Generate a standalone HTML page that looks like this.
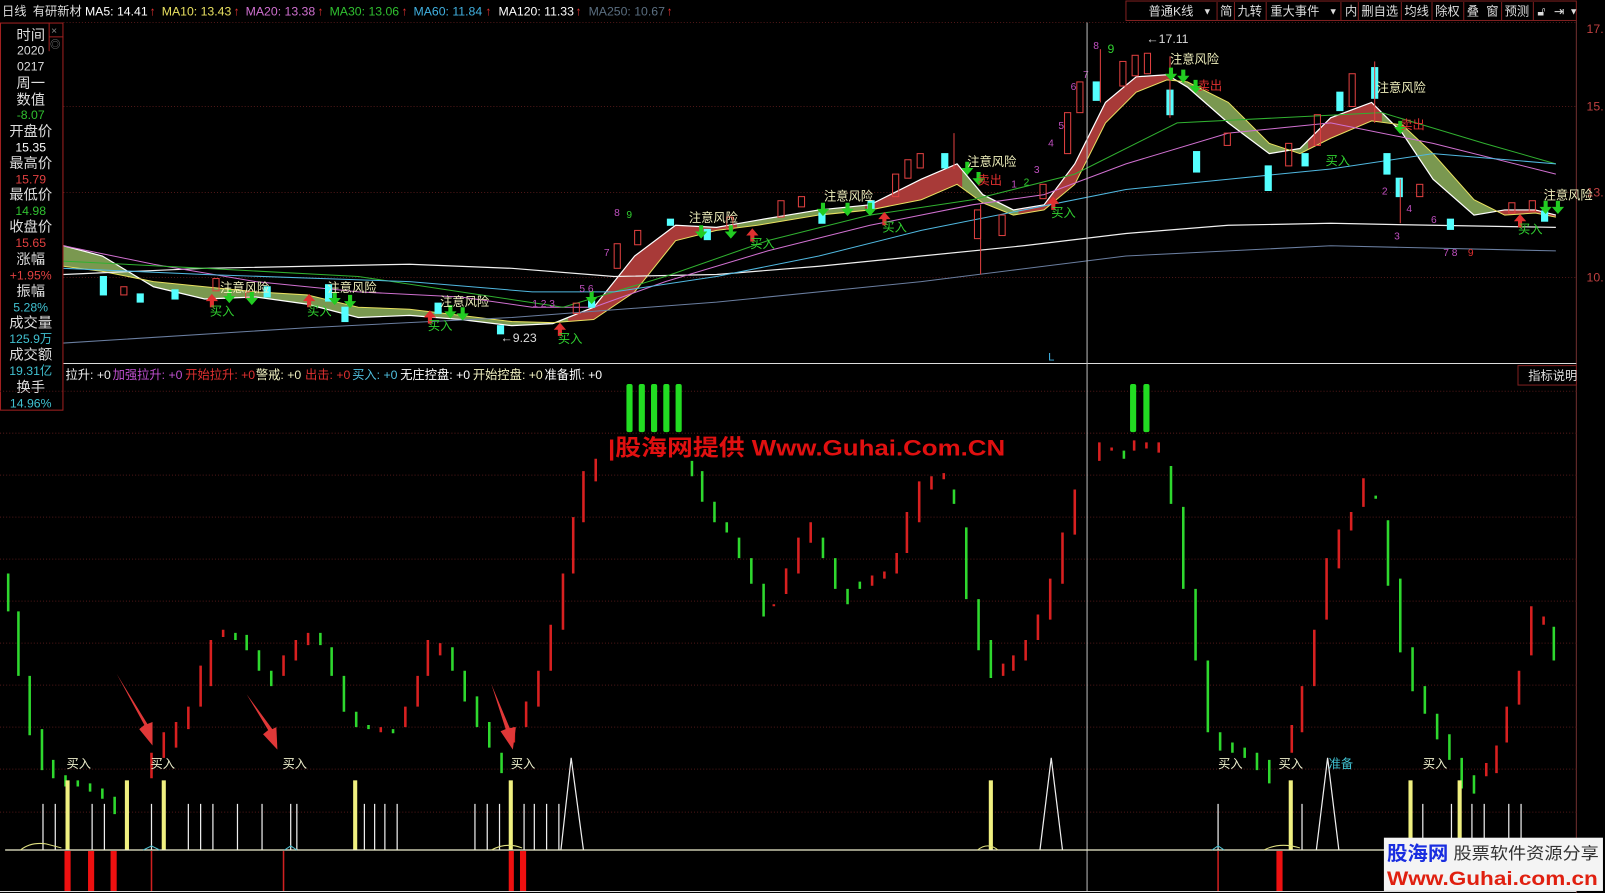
<!DOCTYPE html>
<html><head><meta charset="utf-8"><style>
html,body{margin:0;padding:0;background:#000;width:1605px;height:893px;overflow:hidden}
svg{display:block}
text{font-family:"Liberation Sans","Noto Sans CJK SC","WenQuanYi Zen Hei",sans-serif}
</style></head><body>
<svg width="1605" height="893" viewBox="0 0 1568 872" preserveAspectRatio="none" xmlns="http://www.w3.org/2000/svg">
<rect width="1568" height="872" fill="#000"/>
<!-- top bar -->
<g font-size="12">
<text x="2" y="15" fill="#ddd">日线</text>
<text x="32" y="15" fill="#ddd">有研新材</text>
<text x="83" y="15" fill="#fff">MA5: 14.41</text><text x="146" y="15" fill="#e03030">↑</text>
<text x="158" y="15" fill="#e8e060">MA10: 13.43</text><text x="228" y="15" fill="#e03030">↑</text>
<text x="240" y="15" fill="#d070d0">MA20: 13.38</text><text x="310" y="15" fill="#e03030">↑</text>
<text x="322" y="15" fill="#30c030">MA30: 13.06</text><text x="392" y="15" fill="#e03030">↑</text>
<text x="404" y="15" fill="#40b0e0">MA60: 11.84</text><text x="474" y="15" fill="#e03030">↑</text>
<text x="487" y="15" fill="#fff">MA120: 11.33</text><text x="562" y="15" fill="#e03030">↑</text>
<text x="575" y="15" fill="#5a6e80">MA250: 10.67</text><text x="651" y="15" fill="#e03030">↑</text>
</g>
<rect x="1100" y="1" width="440" height="19" fill="none" stroke="#802020"/>
<g font-size="12" fill="#ddd">
<text x="1122" y="15">普通K线</text><text x="1175" y="14" font-size="9">▼</text>
<text x="1192" y="15">简</text><text x="1209" y="15">九转</text><text x="1241" y="15">重大事件</text><text x="1298" y="14" font-size="9">▼</text>
<text x="1314" y="15">内</text><text x="1330" y="15">删自选</text><text x="1372" y="15">均线</text><text x="1402" y="15">除权</text><text x="1433" y="15">叠</text><text x="1452" y="15">窗</text><text x="1470" y="15">预测</text><text x="1502" y="15">🔓︎</text><text x="1518" y="15">⇥</text><text x="1533" y="14" font-size="9">▼</text>
</g>
<g stroke="#802020" stroke-width="1"><line x1="1189" y1="2" x2="1189" y2="20"/><line x1="1206" y1="2" x2="1206" y2="20"/><line x1="1237" y1="2" x2="1237" y2="20"/><line x1="1310" y1="2" x2="1310" y2="20"/><line x1="1327" y1="2" x2="1327" y2="20"/><line x1="1369" y1="2" x2="1369" y2="20"/><line x1="1399" y1="2" x2="1399" y2="20"/><line x1="1430" y1="2" x2="1430" y2="20"/><line x1="1467" y1="2" x2="1467" y2="20"/><line x1="1498" y1="2" x2="1498" y2="20"/></g>
<line x1="62" y1="22" x2="1540" y2="22" stroke="#501818" stroke-dasharray="1 2"/>
<!-- right axis -->
<line x1="1540" y1="20" x2="1540" y2="872" stroke="#703030"/>
<g font-size="12" fill="#c04040"><text x="1550" y="32">17.</text><text x="1550" y="108">15.</text><text x="1550" y="192">13.</text><text x="1550" y="275">10.</text></g>
<g stroke="#501818" stroke-dasharray="1 2"><line x1="62" y1="104" x2="1540" y2="104"/><line x1="62" y1="188" x2="1540" y2="188"/><line x1="62" y1="271" x2="1540" y2="271"/></g>
<!-- ribbon -->
<defs>
<clipPath id="up"><rect x="555" y="0" width="165" height="400"/><rect x="845" y="0" width="95" height="400"/><rect x="995" y="0" width="155" height="400"/><rect x="1278" y="0" width="72" height="400"/><rect x="1460" y="0" width="60" height="400"/></clipPath>
<polygon id="ribp" points="62,240 100,250 150,280 200,292 250,290 300,297 350,310 400,308 450,312 500,318 540,316 580,300 620,250 660,220 700,222 740,215 800,205 850,200 900,175 935,160 960,190 990,205 1020,200 1050,160 1080,100 1110,75 1140,73 1160,85 1200,120 1240,150 1270,145 1300,115 1340,100 1370,130 1400,175 1440,210 1470,205 1500,205 1520,210 1520,212 1500,208 1470,210 1440,195 1400,150 1370,122 1340,118 1300,135 1270,150 1240,140 1200,100 1160,80 1140,78 1110,90 1080,120 1050,180 1020,205 990,210 960,198 935,180 900,195 850,205 800,210 740,220 700,225 660,235 620,285 580,312 540,315 500,314 450,308 400,302 350,300 300,288 250,285 200,280 150,275 100,265 62,260"/>
</defs>
<use href="#ribp" fill="#7a9850"/>
<use href="#ribp" fill="#a83a38" clip-path="url(#up)"/>
<polyline fill="none" stroke="#fff" stroke-width="1.2" points="62,240 100,250 150,280 200,292 250,290 300,297 350,310 400,308 450,312 500,318 540,316 580,300 620,250 660,220 700,222 740,215 800,205 850,200 900,175 935,160 960,190 990,205 1020,200 1050,160 1080,100 1110,75 1140,73 1160,85 1200,120 1240,150 1270,145 1300,115 1340,100 1370,130 1400,175 1440,210 1470,205 1500,205 1520,210"/>
<polyline fill="none" stroke="#e8e060" stroke-width="1" points="62,260 100,265 150,275 200,280 250,285 300,288 350,300 400,302 450,308 500,314 540,315 580,312 620,285 660,235 700,225 740,220 800,210 850,205 900,195 935,180 960,198 990,210 1020,205 1050,180 1080,120 1110,90 1140,78 1160,80 1200,100 1240,140 1270,150 1300,135 1340,118 1370,122 1400,150 1440,195 1470,210 1500,208 1520,212"/>
<!-- MAs -->
<polyline fill="none" stroke="#f0f0f0" stroke-width="1.2" points="62,268 200,262 400,258 500,262 600,270 700,268 800,260 900,250 1000,240 1100,228 1200,220 1300,218 1400,220 1520,222"/>
<polyline fill="none" stroke="#d070d0" stroke-width="1" points="62,240 150,258 250,275 350,285 450,290 520,300 580,300 650,275 750,245 850,220 950,200 1020,190 1100,160 1200,130 1300,120 1400,140 1520,170"/>
<polyline fill="none" stroke="#30b030" stroke-width="1" points="62,255 200,262 350,270 450,285 550,300 650,270 750,235 850,210 950,195 1050,170 1150,120 1250,115 1350,110 1450,140 1520,160"/>
<polyline fill="none" stroke="#50b8e0" stroke-width="1" points="62,262 200,268 400,275 520,285 600,285 700,270 800,250 900,225 1000,205 1100,185 1200,175 1300,165 1400,150 1520,160"/>
<polyline fill="none" stroke="#6a7ea0" stroke-width="1" points="62,335 300,320 500,310 700,295 900,275 1100,250 1300,240 1520,245"/>
<!-- candles -->
<g stroke-width="1">
<g fill="#54ffff" stroke="#54ffff">
<rect x="98" y="270" width="6" height="18"/><rect x="134" y="287" width="6" height="8"/><rect x="168" y="283" width="6" height="9"/><rect x="258" y="280" width="6" height="10"/><rect x="318" y="278" width="6" height="16"/><rect x="334" y="300" width="6" height="14"/><rect x="425" y="296" width="6" height="10"/><rect x="486" y="318" width="6" height="8"/><rect x="575" y="294" width="6" height="6"/><rect x="652" y="214" width="6" height="6"/><rect x="688" y="224" width="6" height="10"/><rect x="800" y="208" width="6" height="10"/><rect x="848" y="196" width="6" height="8"/><rect x="920" y="150" width="6" height="14"/><rect x="1068" y="80" width="6" height="18"/><rect x="1140" y="88" width="6" height="24"/><rect x="1166" y="148" width="6" height="20"/><rect x="1236" y="162" width="6" height="24"/><rect x="1272" y="150" width="6" height="12"/><rect x="1306" y="90" width="6" height="18"/><rect x="1340" y="66" width="6" height="30"/><rect x="1352" y="150" width="6" height="20"/><rect x="1364" y="174" width="6" height="18"/><rect x="1414" y="214" width="6" height="10"/><rect x="1506" y="206" width="6" height="10"/>
</g>
<g fill="none" stroke="#e04040">
<rect x="118" y="280" width="6" height="8"/><rect x="208" y="272" width="6" height="12"/><rect x="240" y="285" width="6" height="6"/><rect x="560" y="296" width="6" height="10"/><rect x="600" y="238" width="6" height="24"/><rect x="620" y="225" width="6" height="14"/><rect x="710" y="212" width="6" height="12"/><rect x="760" y="196" width="6" height="16"/><rect x="780" y="192" width="6" height="10"/><rect x="872" y="170" width="6" height="22"/><rect x="884" y="156" width="6" height="18"/><rect x="896" y="150" width="6" height="14"/><rect x="952" y="205" width="6" height="28"/><rect x="976" y="210" width="6" height="20"/><rect x="1016" y="180" width="6" height="14"/><rect x="1040" y="110" width="6" height="40"/><rect x="1052" y="80" width="6" height="30"/><rect x="1094" y="60" width="6" height="24"/><rect x="1106" y="54" width="6" height="20"/><rect x="1118" y="52" width="6" height="20"/><rect x="1196" y="130" width="6" height="12"/><rect x="1256" y="140" width="6" height="22"/><rect x="1284" y="112" width="6" height="30"/><rect x="1318" y="72" width="6" height="32"/><rect x="1384" y="180" width="6" height="12"/><rect x="1474" y="198" width="6" height="10"/><rect x="1494" y="196" width="6" height="10"/>
</g>
<g stroke="#e04040"><line x1="958" y1="200" x2="958" y2="268"/><line x1="932" y1="130" x2="932" y2="165"/><line x1="1075" y1="48" x2="1075" y2="100"/><line x1="1143" y1="55" x2="1143" y2="115"/><line x1="1343" y1="60" x2="1343" y2="120"/><line x1="1368" y1="175" x2="1368" y2="218"/></g>
</g>
<!-- arrows & labels top -->
<g fill="#22cc22">
<path d="M1142,66 h4 v6 h4 l-6,7 -6,-7 h4z"/><path d="M1154,68 h4 v6 h4 l-6,7 -6,-7 h4z"/><path d="M1166,78 h4 v6 h4 l-6,7 -6,-7 h4z"/>
<path d="M1366,118 h4 v6 h4 l-6,7 -6,-7 h4z"/><path d="M943,158 h4 v6 h4 l-6,7 -6,-7 h4z"/><path d="M954,168 h4 v6 h4 l-6,7 -6,-7 h4z"/>
<path d="M683,220 h4 v6 h4 l-6,7 -6,-7 h4z"/><path d="M712,220 h4 v6 h4 l-6,7 -6,-7 h4z"/><path d="M802,198 h4 v6 h4 l-6,7 -6,-7 h4z"/><path d="M826,198 h4 v6 h4 l-6,7 -6,-7 h4z"/><path d="M848,198 h4 v6 h4 l-6,7 -6,-7 h4z"/>
<path d="M222,283 h4 v6 h4 l-6,7 -6,-7 h4z"/><path d="M244,285 h4 v6 h4 l-6,7 -6,-7 h4z"/><path d="M325,285 h4 v6 h4 l-6,7 -6,-7 h4z"/><path d="M340,288 h4 v6 h4 l-6,7 -6,-7 h4z"/><path d="M438,298 h4 v6 h4 l-6,7 -6,-7 h4z"/><path d="M450,300 h4 v6 h4 l-6,7 -6,-7 h4z"/><path d="M1508,196 h4 v6 h4 l-6,7 -6,-7 h4z"/><path d="M1520,196 h4 v6 h4 l-6,7 -6,-7 h4z"/><path d="M576,284 h4 v6 h4 l-6,7 -6,-7 h4z"/>
</g>
<g fill="#e03030">
<path d="M205,300 h4 v-6 h4 l-6,-7 -6,7 h4z"/><path d="M300,300 h4 v-6 h4 l-6,-7 -6,7 h4z"/><path d="M418,316 h4 v-6 h4 l-6,-7 -6,7 h4z"/><path d="M545,328 h4 v-6 h4 l-6,-7 -6,7 h4z"/><path d="M733,236 h4 v-6 h4 l-6,-7 -6,7 h4z"/><path d="M862,220 h4 v-6 h4 l-6,-7 -6,7 h4z"/><path d="M1027,205 h4 v-6 h4 l-6,-7 -6,7 h4z"/><path d="M1483,222 h4 v-6 h4 l-6,-7 -6,7 h4z"/>
</g>
<g font-size="12" fill="#eeeebb">
<text x="215" y="285">注意风险</text><text x="320" y="285">注意风险</text><text x="430" y="299">注意风险</text><text x="673" y="217">注意风险</text><text x="805" y="196">注意风险</text><text x="945" y="162">注意风险</text><text x="1143" y="62">注意风险</text><text x="1345" y="90">注意风险</text><text x="1508" y="195">注意风险</text>
</g>
<g font-size="12" fill="#30d030">
<text x="205" y="308">买入</text><text x="300" y="308">买入</text><text x="418" y="322">买入</text><text x="545" y="335">买入</text><text x="733" y="242">买入</text><text x="862" y="226">买入</text><text x="1027" y="212">买入</text><text x="1295" y="161">买入</text><text x="1483" y="228">买入</text>
</g>
<g font-size="12" fill="#e03030"><text x="955" y="180">卖出</text><text x="1170" y="88">卖出</text><text x="1368" y="126">卖出</text></g>
<g font-size="10">
<text x="600" y="211" fill="#c050c0">8</text><text x="612" y="213" fill="#30d030">9</text><text x="590" y="250" fill="#c050c0">7</text>
<text x="520" y="300" fill="#c050c0">1 2 3</text><text x="566" y="285" fill="#c050c0">5 6</text>
<text x="988" y="183" fill="#c050c0">1</text><text x="1000" y="181" fill="#30d030">2</text><text x="1010" y="169" fill="#c050c0">3</text><text x="1024" y="143" fill="#c050c0">4</text><text x="1034" y="126" fill="#c050c0">5</text><text x="1046" y="88" fill="#c050c0">6</text><text x="1058" y="76" fill="#c050c0">7</text><text x="1068" y="48" fill="#c050c0">8</text><text x="1082" y="52" fill="#30d030" font-size="12">9</text>
<text x="1350" y="190" fill="#c050c0">2</text><text x="1362" y="234" fill="#c050c0">3</text><text x="1374" y="207" fill="#c050c0">4</text><text x="1398" y="218" fill="#c050c0">6</text><text x="1410" y="250" fill="#c050c0">7 8</text><text x="1434" y="250" fill="#e03030">9</text>
</g>
<text x="1120" y="42" font-size="12" fill="#ddd">←17.11</text>
<text x="489" y="334" font-size="12" fill="#ddd">←9.23</text>
<text x="1024" y="352" font-size="11" fill="#40b0e0">L</text>
<!-- separator -->
<line x1="62" y1="355" x2="1540" y2="355" stroke="#ddd"/>
<!-- left panel -->
<rect x="0.5" y="22.5" width="61" height="378" fill="#000" stroke="#a02020"/>
<line x1="48" y1="22" x2="48" y2="50" stroke="#a02020"/><line x1="48" y1="36" x2="62" y2="36" stroke="#a02020"/>
<text x="50" y="33" font-size="10" fill="#888">×</text><text x="49" y="47" font-size="10" fill="#888">◎</text>
<g font-size="14" fill="#ddd" text-anchor="middle">
<text x="30" y="39">时间</text><text x="30" y="86">周一</text><text x="30" y="102">数值</text><text x="30" y="133">开盘价</text><text x="30" y="164">最高价</text><text x="30" y="195">最低价</text><text x="30" y="226">收盘价</text><text x="30" y="258">涨幅</text><text x="30" y="289">振幅</text><text x="30" y="320">成交量</text><text x="30" y="351">成交额</text><text x="30" y="383">换手</text>
</g>
<g font-size="12" text-anchor="middle" font-family="Liberation Mono">
<text x="30" y="53" fill="#ddd">2020</text><text x="30" y="69" fill="#ddd">0217</text><text x="30" y="116" fill="#30c030">-8.07</text><text x="30" y="148" fill="#fff">15.35</text><text x="30" y="179" fill="#e04040">15.79</text><text x="30" y="210" fill="#30c030">14.98</text><text x="30" y="241" fill="#e04040">15.65</text><text x="30" y="273" fill="#e04040">+1.95%</text><text x="30" y="304" fill="#40c0d0">5.28%</text><text x="30" y="335" fill="#40c0d0">125.9万</text><text x="30" y="366" fill="#40c0d0">19.31亿</text><text x="30" y="398" fill="#40c0d0">14.96%</text>
</g>
<!-- indicator header -->
<g font-size="12">
<text x="64" y="370" fill="#eee">拉升: +0</text><text x="110" y="370" fill="#c050d0">加强拉升: +0</text><text x="181" y="370" fill="#e03030">开始拉升: +0</text><text x="250" y="370" fill="#f0f0c0">警戒: +0</text><text x="298" y="370" fill="#e03030">出击: +0</text><text x="344" y="370" fill="#50c0e0">买入: +0</text><text x="391" y="370" fill="#fff">无庄控盘: +0</text><text x="462" y="370" fill="#f0f0c0">开始控盘: +0</text><text x="532" y="370" fill="#fff">准备抓: +0</text>
</g>
<rect x="1483" y="357" width="57" height="19" fill="#000" stroke="#802020"/>
<text x="1493" y="371" font-size="12" fill="#ddd">指标说明</text>
<!-- lower grid -->
<g stroke="#501818" stroke-dasharray="1 2">
<line x1="0" y1="382" x2="1540" y2="382"/><line x1="0" y1="423" x2="1540" y2="423"/><line x1="0" y1="464" x2="1540" y2="464"/><line x1="0" y1="505" x2="1540" y2="505"/><line x1="0" y1="546" x2="1540" y2="546"/><line x1="0" y1="587" x2="1540" y2="587"/><line x1="0" y1="628" x2="1540" y2="628"/><line x1="0" y1="669" x2="1540" y2="669"/><line x1="0" y1="710" x2="1540" y2="710"/><line x1="0" y1="751" x2="1540" y2="751"/><line x1="0" y1="793" x2="1540" y2="793"/>
</g>
<line x1="1062" y1="22" x2="1062" y2="870" stroke="#bbb"/>
<!-- lower bars -->
<path fill="none" stroke="#2ed82e" stroke-width="2.5" d="M8,560V597M18,597V660M29,660V718M41,712V752M52,742V760M64,757V768M76,762V768M88,765V773M100,770V780M112,778V795M124,785V800M230,618V625M241,620V635M253,635V655M265,655V670M313,618V630M324,632V660M336,660V695M348,695V710M360,708V712M384,712V716M442,632V655M454,655V685M466,680V710M478,705V730M490,735V755M676,450V465M686,460V490M698,490V510M710,510V520M722,525V545M734,545V570M746,570V602M804,525V545M816,545V575M828,575V590M840,568V575M932,478V492M944,515V585M956,585V635M968,625V662M1098,440V448M1144,455V492M1156,495V575M1168,575V645M1180,645V715M1192,715V733M1204,725V735M1216,730V740M1228,735V752M1240,742V765M1344,484V487M1356,508V572M1368,565V637M1380,632V675M1392,670V697M1404,697V722M1416,717V742M1428,740V770M1440,757V775M1518,612V645"/>
<path fill="none" stroke="#d82020" stroke-width="2.5" d="M148,735V760M160,715V740M172,705V730M184,690V712M196,650V690M206,625V670M218,615V622M277,640V660M289,625V645M301,618V630M372,710V715M396,690V710M408,660V690M418,625V660M430,628V640M502,710V725M514,685V710M526,655V690M538,610V655M550,560V615M560,505V560M570,460V510M582,448V470M756,590V592M768,555V580M780,525V560M792,510V530M852,562V572M864,558V565M876,540V560M886,500V540M898,470V510M910,465V478M922,462V468M980,648V660M990,640V655M1002,625V645M1014,600V625M1026,565V605M1038,520V570M1050,478V522M1074,432V450M1086,437V440M1108,430V440M1120,432V438M1132,432V442M1262,708V735M1272,670V715M1284,615V670M1296,545V605M1308,517V555M1320,500V518M1332,467V495M1452,745V758M1462,728V755M1472,690V725M1484,655V688M1496,592V640M1508,602V610"/>
<g fill="#22dd22"><rect x="612" y="375" width="6" height="47" rx="2"/><rect x="624" y="375" width="6" height="47" rx="2"/><rect x="636" y="375" width="6" height="47" rx="2"/><rect x="648" y="375" width="6" height="47" rx="2"/><rect x="660" y="375" width="6" height="47" rx="2"/><rect x="1104" y="375" width="6" height="47" rx="2"/><rect x="1117" y="375" width="6" height="47" rx="2"/></g>
<!-- red arrows -->
<g fill="#e03838">
<path d="M114,658 L141,708 L136,712 L149,728 L149,705 L144,707 Z"/>
<path d="M241,678 L262,713 L257,717 L271,732 L270,710 L266,712 Z"/>
<path d="M480,668 L494,712 L489,714 L501,732 L504,710 L498,711 Z"/>
</g>
<!-- watermark -->
<text x="594" y="445" font-size="22" font-weight="bold" fill="#e01010" textLength="388" lengthAdjust="spacingAndGlyphs">|股海网提供 Www.Guhai.Com.CN</text>
<!-- buy labels lower -->
<g font-size="12" fill="#eeeecc"><text x="65" y="750">买入</text><text x="147" y="750">买入</text><text x="276" y="750">买入</text><text x="499" y="750">买入</text><text x="1190" y="750">买入</text><text x="1249" y="750">买入</text><text x="1390" y="750">买入</text></g>
<text x="1298" y="750" font-size="12" fill="#40c0d0">准备</text>
<!-- white thin lines -->
<path fill="none" stroke="#eee" stroke-width="1.2" d="M42,785V830M54,785V830M90,785V830M102,785V830M148,785V830M184,785V830M196,785V830M208,785V830M232,785V830M256,785V830M284,785V830M290,785V830M356,785V830M366,785V830M376,785V830M388,785V830M464,785V830M476,785V830M488,785V830M512,785V830M522,785V830M534,785V830M546,785V830M1190,785V830M1272,785V830M1390,785V830M1418,785V830M1438,785V830M1450,785V830M1474,785V830M1486,785V830"/>
<path fill="none" stroke="#eee" stroke-width="1.2" d="M548,830L558,740L570,830M1016,830L1027,740L1038,830M1286,830L1297,740L1308,830"/>
<g fill="#f0f080"><rect x="64" y="762" width="4" height="68"/><rect x="122" y="762" width="4" height="68"/><rect x="158" y="762" width="4" height="68"/><rect x="345" y="762" width="4" height="68"/><rect x="497" y="762" width="4" height="68"/><rect x="966" y="762" width="4" height="68"/><rect x="1259" y="762" width="4" height="68"/><rect x="1376" y="762" width="4" height="68"/><rect x="1424" y="762" width="4" height="68"/></g>
<line x1="5" y1="830" x2="1540" y2="830" stroke="#f0f0d0" stroke-width="1.3"/>
<path fill="none" stroke="#e0e080" stroke-width="1" d="M20,830 Q30,822 45,824 L60,828 M480,830 Q495,822 510,828 M955,830 Q965,822 975,830 M1235,830 Q1250,822 1270,828"/>
<path fill="none" stroke="#50c0d0" stroke-width="1" d="M140,830 L148,826 L156,830 M278,830 L284,826 L290,830 M1184,830 L1190,826 L1196,830"/>
<!-- red below -->
<g fill="#ee1010"><rect x="63" y="831" width="6" height="40"/><rect x="86" y="831" width="6" height="40"/><rect x="108" y="831" width="6" height="40"/><rect x="497" y="831" width="5" height="40"/><rect x="508" y="831" width="6" height="40"/><rect x="1247" y="831" width="6" height="40"/></g>
<path stroke="#d02020" stroke-width="1.5" d="M148,831V871M277,831V871M1190,831V871"/>
<line x1="0" y1="870.5" x2="1540" y2="870.5" stroke="#ddd"/>
<!-- logo -->
<rect x="1352" y="818" width="214" height="52" fill="#f4f4f4"/>
<text x="1355" y="840" font-size="19" font-weight="bold" fill="#1a2ee0" textLength="60" lengthAdjust="spacingAndGlyphs">股海网</text>
<text x="1420" y="839" font-size="16" fill="#333" textLength="142" lengthAdjust="spacingAndGlyphs">股票软件资源分享</text>
<text x="1355" y="864" font-size="19" font-weight="bold" fill="#e02010" textLength="206" lengthAdjust="spacingAndGlyphs">Www.Guhai.com.cn</text>
</svg>
</body></html>
